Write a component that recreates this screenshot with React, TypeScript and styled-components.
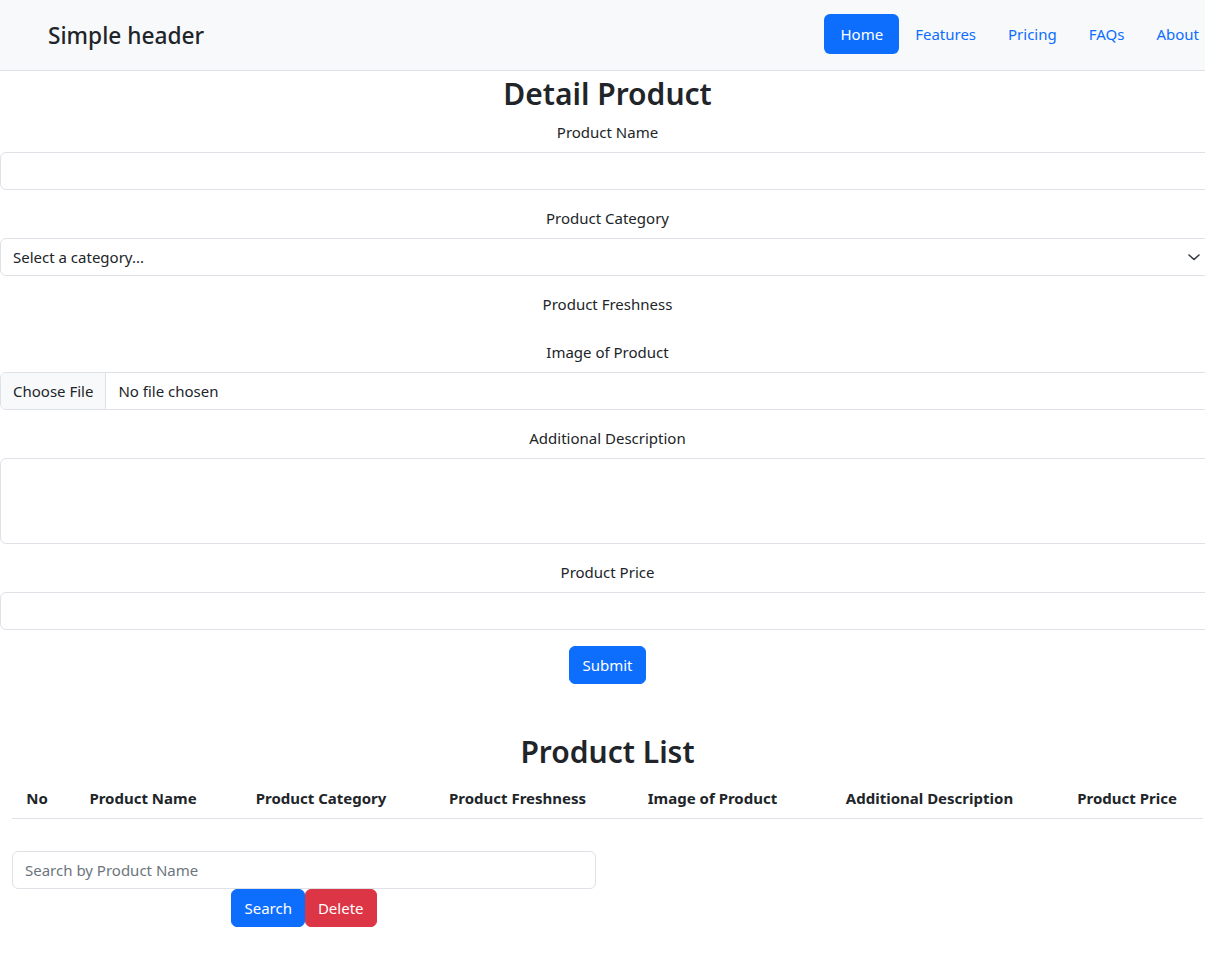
import React from "react";
import styled, { createGlobalStyle } from "styled-components";

const Global = createGlobalStyle`
  html, body { margin: 0; padding: 0; overflow-x: hidden; background: #fff; }
  body {
    font-family: "Noto Sans", "Open Sans", sans-serif;
    font-size: 15px;
    line-height: 24px;
    color: #212529;
  }
  * { box-sizing: border-box; }
`;

const Page = styled.div`
  width: 1215px;
`;

const Header = styled.header`
  display: flex;
  align-items: center;
  justify-content: space-between;
  padding: 14px 0 16px;
  background: #f8f9fa;
  border-bottom: 1px solid #dee2e6;
`;

const Brand = styled.a`
  display: flex;
  align-items: center;
  padding-left: 48px;
  margin-top: 3px;
  font-size: 22.7px;
  line-height: 36px;
  font-weight: 500;
  color: #212529;
  text-decoration: none;
`;

const Nav = styled.ul`
  display: flex;
  list-style: none;
  margin: 0;
  padding: 0;
`;

const NavLink = styled.a<{ $active?: boolean }>`
  display: block;
  padding: 8px 16px;
  border-radius: 6px;
  font-size: 15px;
  line-height: 24px;
  text-decoration: none;
  color: ${(p) => (p.$active ? "#fff" : "#0d6efd")};
  background: ${(p) => (p.$active ? "#0d6efd" : "transparent")};
`;

const Title = styled.h2<{ $top?: number }>`
  margin: ${(p) => p.$top ?? 4}px 0 7px;
  font-size: 30px;
  line-height: 38px;
  font-weight: 600;
  text-align: center;
`;

const Form = styled.form`
  display: flex;
  flex-direction: column;
`;

const Group = styled.div`
  display: flex;
  flex-direction: column;
  margin-bottom: 16px;
`;

const Label = styled.label`
  display: block;
  text-align: center;
  margin-bottom: 8px;
  line-height: 24px;
`;

const Input = styled.input`
  display: block;
  width: 100%;
  height: 38px;
  padding: 6px 12px;
  font: inherit;
  color: #212529;
  background: #fff;
  border: 1px solid #dee2e6;
  border-radius: 6px;
  outline: none;
  &::placeholder { color: #6c757d; }
`;

const SelectBox = styled.div`
  display: flex;
  align-items: center;
  justify-content: space-between;
  height: 38px;
  padding: 6px 12px;
  border: 1px solid #dee2e6;
  border-radius: 6px;
  background: #fff;
  line-height: 24px;
`;

const FileBox = styled.div`
  display: flex;
  align-items: stretch;
  height: 38px;
  border: 1px solid #dee2e6;
  border-radius: 6px;
  overflow: hidden;
`;

const FileButton = styled.span`
  display: flex;
  align-items: center;
  padding: 0 12px;
  background: #f8f9fa;
  border-right: 1px solid #dee2e6;
`;

const FileText = styled.span`
  display: flex;
  align-items: center;
  padding: 0 12px;
`;

const TextArea = styled.textarea`
  display: block;
  width: 100%;
  height: 86px;
  padding: 6px 12px;
  font: inherit;
  border: 1px solid #dee2e6;
  border-radius: 6px;
  resize: none;
  outline: none;
`;

const Center = styled.div`
  display: flex;
  justify-content: center;
`;

const Button = styled.button<{ $variant?: "primary" | "danger" }>`
  height: 38px;
  padding: 6px 12px;
  font: inherit;
  color: #fff;
  background: ${(p) => (p.$variant === "danger" ? "#dc3545" : "#0d6efd")};
  border: 1px solid ${(p) => (p.$variant === "danger" ? "#dc3545" : "#0d6efd")};
  border-radius: 6px;
  cursor: pointer;
`;

const ListSection = styled.section`
  padding: 0 12px;
`;

const Table = styled.table`
  width: 1191px;
  border-collapse: collapse;
  table-layout: fixed;
  margin-bottom: 32px;
`;

const Th = styled.th<{ $w: number }>`
  width: ${(p) => p.$w}px;
  padding: 8px;
  font-weight: 700;
  text-align: center;
  border-bottom: 1px solid #dee2e6;
  white-space: nowrap;
`;

const SearchCol = styled.div`
  display: flex;
  flex-direction: column;
  width: 584px;
`;

const cols: [string, number][] = [
  ["No", 50],
  ["Product Name", 162],
  ["Product Category", 194],
  ["Product Freshness", 199],
  ["Image of Product", 191],
  ["Additional Description", 243],
  ["Product Price", 152],
];

const Chevron = () => (
  <svg width="16" height="16" viewBox="0 0 16 16" fill="none">
    <path d="M3 6l5 4.5 5-4.5" stroke="#343a40" strokeWidth="1.6" strokeLinecap="round" strokeLinejoin="round" />
  </svg>
);

export default function App() {
  return (
    <Page>
      <Global />
      <Header>
        <Brand href="#">Simple header</Brand>
        <Nav>
          <li><NavLink href="#" $active>Home</NavLink></li>
          <li><NavLink href="#">Features</NavLink></li>
          <li><NavLink href="#">Pricing</NavLink></li>
          <li><NavLink href="#">FAQs</NavLink></li>
          <li><NavLink href="#">About</NavLink></li>
        </Nav>
      </Header>

      <Title>Detail Product</Title>
      <Form onSubmit={(e) => e.preventDefault()}>
        <Group>
          <Label>Product Name</Label>
          <Input type="text" />
        </Group>
        <Group>
          <Label>Product Category</Label>
          <SelectBox>
            <span>Select a category...</span>
            <Chevron />
          </SelectBox>
        </Group>
        <Group>
          <Label>Product Freshness</Label>
        </Group>
        <Group>
          <Label>Image of Product</Label>
          <FileBox>
            <FileButton>Choose File</FileButton>
            <FileText>No file chosen</FileText>
          </FileBox>
        </Group>
        <Group>
          <Label>Additional Description</Label>
          <TextArea />
        </Group>
        <Group>
          <Label>Product Price</Label>
          <Input type="text" />
        </Group>
        <Center>
          <Button type="submit">Submit</Button>
        </Center>
      </Form>

      <Title $top={49}>Product List</Title>
      <ListSection>
        <Table>
          <thead>
            <tr>
              {cols.map(([c, w]) => (
                <Th key={c} $w={w}>{c}</Th>
              ))}
            </tr>
          </thead>
        </Table>
        <SearchCol>
          <Input type="text" placeholder="Search by Product Name" />
          <Center>
            <Button>Search</Button>
            <Button $variant="danger">Delete</Button>
          </Center>
        </SearchCol>
      </ListSection>
    </Page>
  );
}
